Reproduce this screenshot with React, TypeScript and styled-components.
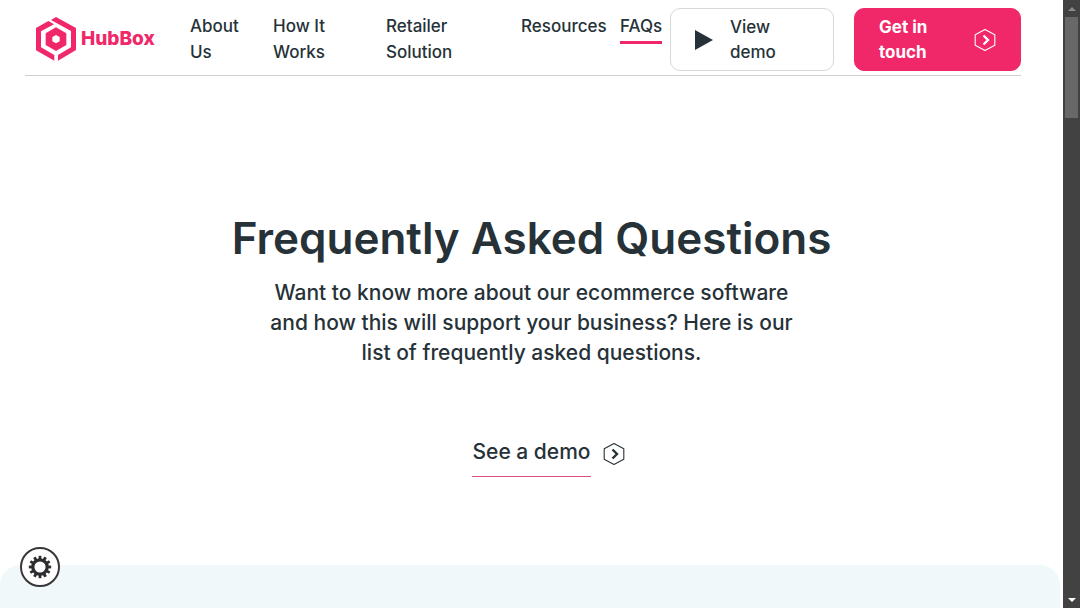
import React from "react";
import styled, { createGlobalStyle } from "styled-components";

const ink = "#263238";
const pink = "#f0286a";

const GlobalStyle = createGlobalStyle`
  * { box-sizing: border-box; }
  body {
    margin: 0;
    background: #fff;
    color: ${ink};
    font-family: Inter, "Liberation Sans", sans-serif;
    font-weight: 500;
  }
  h1, p { margin: 0; }
  a { color: inherit; text-decoration: none; }
`;

const Shell = styled.div`
  display: grid;
  grid-template-columns: minmax(0, 1fr) 17px;
  height: 100vh;
  overflow: hidden;
`;

const Page = styled.div`
  display: flex;
  flex-direction: column;
  min-width: 0;
  overflow: hidden;
`;

const Header = styled.header`
  display: flex;
  align-items: flex-start;
  margin: 0 42px 0 25px;
  padding: 8px 0 4px;
  border-bottom: 1px solid #cfcfd1;
`;

const Logo = styled.a`
  display: flex;
  align-items: center;
  gap: 5px;
  width: 165px;
  padding: 9px 0 0 11px;
  color: ${pink};
  font-size: 19px;
  font-weight: 800;
  line-height: 44px;
`;

const Nav = styled.nav`
  display: grid;
  flex: 1;
  grid-template-columns: 67fr 97fr 119fr 83px 42px;
  column-gap: 16px;
  align-items: start;
  padding: 5px 8px 0 0;
`;

const NavLink = styled.a<{ $active?: boolean }>`
  padding-bottom: 2px;
  border-bottom: 3px solid ${(p) => (p.$active ? pink : "transparent")};
  font-size: 17px;
  line-height: 26px;
`;

const Actions = styled.div`
  display: flex;
  gap: 20px;
`;

const ActionButton = styled.button<{ $primary?: boolean }>`
  display: flex;
  align-items: center;
  justify-content: ${(p) => (p.$primary ? "space-between" : "flex-start")};
  gap: 17px;
  width: ${(p) => (p.$primary ? 167 : 164)}px;
  padding: 6px 24px 5px;
  border: 1px solid ${(p) => (p.$primary ? pink : "#d8d8da")};
  border-radius: 10px;
  background: ${(p) => (p.$primary ? pink : "#fff")};
  color: ${(p) => (p.$primary ? "#fff" : ink)};
  font: inherit;
  font-size: 17px;
  font-weight: ${(p) => (p.$primary ? 700 : 500)};
  line-height: 25px;
  text-align: left;
  cursor: pointer;
`;

const ActionText = styled.span`
  width: 56px;
`;

const Hero = styled.main`
  display: flex;
  flex-direction: column;
  align-items: center;
  padding: 132px 24px 88px;
  text-align: center;
`;

const Title = styled.h1`
  font-size: 44px;
  font-weight: 600;
  line-height: 60px;
`;

const Lead = styled.p`
  max-width: 530px;
  padding-top: 10px;
  font-size: 21px;
  line-height: 30px;
`;

const DemoLink = styled.a`
  display: flex;
  align-items: flex-start;
  gap: 12px;
  margin: 68px 0 0 34px;
  font-size: 21px;
  line-height: 32px;

  svg {
    margin-top: 6px;
  }
`;

const DemoText = styled.span`
  padding-bottom: 8px;
  border-bottom: 1px solid #dc4f84;
`;

const Panel = styled.section`
  flex: 1;
  margin-right: 3px;
  border-radius: 20px 20px 0 0;
  background: #f1f8fa;
`;

const SettingsButton = styled.button`
  position: fixed;
  bottom: 21px;
  left: 20px;
  display: grid;
  place-items: center;
  width: 40px;
  height: 40px;
  padding: 0;
  border: 2px solid #38383a;
  border-radius: 50%;
  background: #fff;
  cursor: pointer;
`;

const ScrollTrack = styled.div`
  display: flex;
  flex-direction: column;
  padding: 0 2px;
  background: #424242;
`;

const ScrollThumb = styled.div`
  height: 101px;
  margin-bottom: auto;
  background: #686868;
`;

const ScrollArrow = styled.button`
  display: grid;
  place-items: center;
  height: 17px;
  padding: 0;
  border: 0;
  background: transparent;
`;

function LogoMark() {
  return (
    <svg width="40" height="44" viewBox="48 51 120 132" fill={pink} aria-hidden="true">
      <path d="M108 51 168 84V150L114 182V165L153 142V93L93 60Z" />
      <path d="M85 63 102 73 63 94V142L103 165V182L48 151V84Z" />
      <path
        fillRule="evenodd"
        d="M108 82 139 100V135L108 153 77 135V100ZM108 105 97 111V124L108 130 119 124V111Z"
      />
    </svg>
  );
}

function HexArrow() {
  return (
    <svg width="22" height="24" viewBox="0 0 22 24" fill="none" stroke="currentColor" aria-hidden="true">
      <path d="M11 1.5 20.8 6.8V17.2L11 22.5 1.2 17.2V6.8Z" strokeWidth="1.1" strokeLinejoin="round" />
      <path d="M9.5 7.5 14 12 9.5 16.5" strokeWidth="2.4" />
    </svg>
  );
}

function PlayIcon() {
  return (
    <svg width="18" height="20" viewBox="0 0 18 20" fill={ink} aria-hidden="true">
      <path d="M0 0 18 10 0 20Z" />
    </svg>
  );
}

const teeth = Array.from({ length: 12 }, (_, i) => i * 30);

function GearIcon() {
  return (
    <svg width="24" height="24" viewBox="0 0 24 24" fill="#2d2d2f" aria-hidden="true">
      {teeth.map((angle) => (
        <rect key={angle} x="10.6" y="0.8" width="2.8" height="4" transform={`rotate(${angle} 12 12)`} />
      ))}
      <circle cx="12" cy="12" r="7.2" fill="none" stroke="#2d2d2f" strokeWidth="3.2" />
    </svg>
  );
}

export default function App() {
  return (
    <>
      <GlobalStyle />
      <Shell>
        <Page>
          <Header>
            <Logo href="#">
              <LogoMark />
              HubBox
            </Logo>
            <Nav>
              <NavLink href="#about">About Us</NavLink>
              <NavLink href="#how">How It Works</NavLink>
              <NavLink href="#retailer">Retailer Solution</NavLink>
              <NavLink href="#resources">Resources</NavLink>
              <NavLink href="#faqs" $active>
                FAQs
              </NavLink>
            </Nav>
            <Actions>
              <ActionButton>
                <PlayIcon />
                <ActionText>View demo</ActionText>
              </ActionButton>
              <ActionButton $primary>
                <ActionText>Get in touch</ActionText>
                <HexArrow />
              </ActionButton>
            </Actions>
          </Header>
          <Hero>
            <Title>Frequently Asked Questions</Title>
            <Lead>
              Want to know more about our ecommerce software and how this will support your business? Here is our list
              of frequently asked questions.
            </Lead>
            <DemoLink href="#demo">
              <DemoText>See a demo</DemoText>
              <HexArrow />
            </DemoLink>
          </Hero>
          <Panel />
        </Page>
        <ScrollTrack>
          <ScrollArrow aria-label="Scroll up">
            <svg width="8" height="4" viewBox="0 0 8 4" fill="#8a8a8a">
              <path d="M0 4 4 0 8 4Z" />
            </svg>
          </ScrollArrow>
          <ScrollThumb />
          <ScrollArrow aria-label="Scroll down">
            <svg width="8" height="4" viewBox="0 0 8 4" fill="#fff">
              <path d="M0 0H8L4 4Z" />
            </svg>
          </ScrollArrow>
        </ScrollTrack>
      </Shell>
      <SettingsButton aria-label="Settings">
        <GearIcon />
      </SettingsButton>
    </>
  );
}
